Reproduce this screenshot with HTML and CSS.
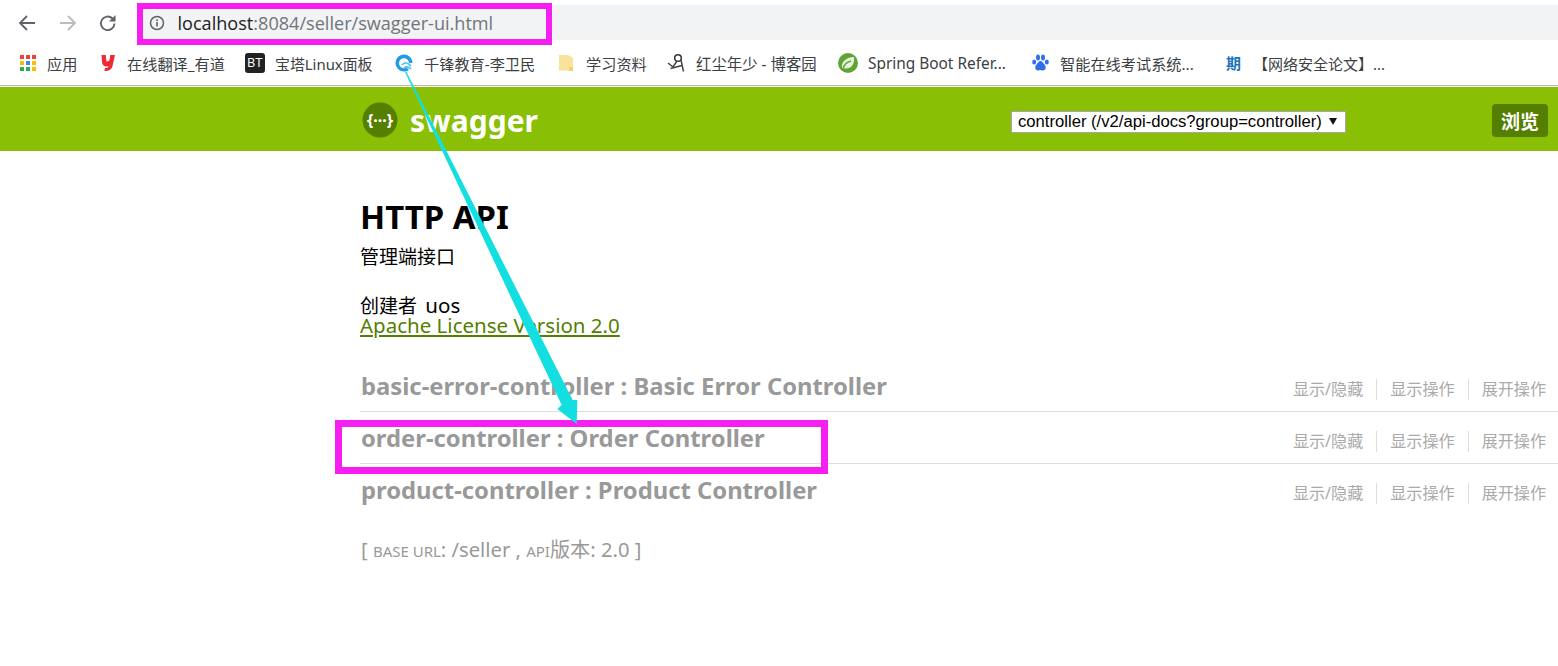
FILE: index.html
```html
<!DOCTYPE html>
<html lang="zh">
<head>
<meta charset="utf-8">
<title>Swagger UI</title>
<link rel="stylesheet" href="styles.css">
</head>
<body>
<div class="toolbar">
  <svg class="nav" width="20" height="20" viewBox="0 0 20 20"><path d="M18 10H3.500M10 3 3 10l7 7" fill="none" stroke="#5f6368" stroke-width="1.800"/></svg>
  <svg class="nav" width="20" height="20" viewBox="0 0 20 20"><path d="M2 10h14.500M10 3l7 7-7 7" fill="none" stroke="#b9bbbe" stroke-width="1.800"/></svg>
  <svg class="nav" width="20" height="20" viewBox="0 0 20 20"><path d="M16.500 10.500a6.800 6.800 0 1 1-2-5" fill="none" stroke="#5f6368" stroke-width="1.900"/><path d="M17.500 2v6.500H11z" fill="#5f6368"/></svg>
  <div class="omnibox">
    <svg class="info" width="16" height="16" viewBox="0 0 16 16"><circle cx="8" cy="8" r="6.500" fill="none" stroke="#5f6368" stroke-width="1.500"/><path d="M7.200 7h1.600v4.500H7.200zM7.200 4.300h1.600v1.600H7.200z" fill="#5f6368"/></svg>
    <span class="host">localhost</span><span class="path">:8084/seller/swagger-ui.html</span>
  </div>
</div>
<div class="bookmarks">
  <span class="bm bm-apps"><svg width="16" height="16" viewBox="0 0 16 16"><g><rect x="0" y="0" width="4" height="4" fill="#ea4335"/><rect x="6" y="0" width="4" height="4" fill="#ea4335"/><rect x="12" y="0" width="4" height="4" fill="#ea4335"/><rect x="0" y="6" width="4" height="4" fill="#fbbc05"/><rect x="6" y="6" width="4" height="4" fill="#4285f4"/><rect x="12" y="6" width="4" height="4" fill="#fbbc05"/><rect x="0" y="12" width="4" height="4" fill="#34a853"/><rect x="6" y="12" width="4" height="4" fill="#34a853"/><rect x="12" y="12" width="4" height="4" fill="#fbbc05"/></g></svg>应用</span>
  <span class="bm bm-youdao"><svg width="16" height="18" viewBox="0 0 16 18"><path d="M1.500 1h4.200l.8 6.500c2 .3 3-1 3.200-2.500L10.200 1H15l-2.500 11c-.7 3.500-3.200 5-8 5l.4-3c2.200 0 3.200-.3 3.600-1.800-4 .8-6.200-.7-6.500-4.200z" fill="#ee2a37"/></svg>在线翻译_有道</span>
  <span class="bm bm-bt"><span class="bt-icon">BT</span>宝塔Linux面板</span>
  <span class="bm bm-qf"><svg width="20" height="20" viewBox="0 0 20 20"><path d="M10 1.500a8.500 8.500 0 1 0 5 15.400l-2.500-2.400A5 5 0 1 1 15 10h3.500A8.500 8.500 0 0 0 10 1.500z" fill="#1f9be8"/><path d="M8 12c2-3 5-3 9 1M10 15c2-2 4-2 7 1" fill="none" stroke="#5fc0ef" stroke-width="1.800"/></svg>千锋教育-李卫民</span>
  <span class="bm bm-folder"><svg width="16" height="18" viewBox="0 0 16 18"><path d="M1 1h9l5 3v12.500H1z" fill="#fbe29b"/><path d="M11 13h4v4h-4z" fill="#f8cf63"/></svg>学习资料</span>
  <span class="bm bm-hc"><svg width="18" height="20" viewBox="0 0 18 20"><circle cx="11" cy="5" r="3.300" fill="none" stroke="#333" stroke-width="1.500"/><path d="M1 10l5 4 4-6M3.500 15.500 15 12.500M14 7l2.500 11.500" fill="none" stroke="#444" stroke-width="1.500"/></svg>红尘年少 - 博客园</span>
  <span class="bm bm-spring"><svg width="20" height="20" viewBox="0 0 20 20"><circle cx="10" cy="10" r="10" fill="#5fa536"/><path d="M4 15C3 8 9 4 16 4c1 7-3 12-9 11.500z" fill="#e8f3dd"/><path d="M5 16c1-4 4-7 8-8" fill="none" stroke="#5fa536" stroke-width="1.500"/></svg>Spring Boot Refer...</span>
  <span class="bm bm-baidu"><svg width="17" height="18" viewBox="0 0 17 18"><g fill="#2f6fee"><ellipse cx="6" cy="3.500" rx="2" ry="3"/><ellipse cx="11" cy="3.500" rx="2" ry="3"/><ellipse cx="2.200" cy="8" rx="2" ry="2.600"/><ellipse cx="14.800" cy="8" rx="2" ry="2.600"/><path d="M8.500 7c2 0 2.500 2 4 3.500 2 2 1.500 6-1.500 6-1.200 0-1.800-.5-2.500-.5s-1.300.5-2.500.5c-3 0-3.500-4-1.500-6C6 9 6.500 7 8.500 7z"/></g></svg>智能在线考试系统...</span>
  <span class="bm bm-paper"><span class="zhi">期</span>【网络安全论文】...</span>
</div>
<header class="swagger-header">
  <div class="logo">
    <svg width="36" height="36" viewBox="0 0 36 36"><circle cx="18" cy="18" r="17.500" fill="#547f00"/><text x="18" y="23.500" class="logo-glyph" text-anchor="middle">{···}</text></svg>
    <span class="logo-text">swagger</span>
  </div>
  <div class="select">controller (/v2/api-docs?group=controller)<span class="caret"></span></div>
  <button class="explore">浏览</button>
</header>
<main class="content">
  <h1>HTTP API</h1>
  <p class="desc">管理端接口</p>
  <p class="creator"><span class="cjk">创建者</span> uos</p>
  <a class="license" href="#">Apache License Version 2.0</a>
  <section class="resources">
    <div class="resource"><h2>basic-error-controller : Basic Error Controller</h2><ul class="ops"><li>显示/隐藏</li><li>显示操作</li><li>展开操作</li></ul></div>
    <div class="resource"><h2>order-controller : Order Controller</h2><ul class="ops"><li>显示/隐藏</li><li>显示操作</li><li>展开操作</li></ul></div>
    <div class="resource last"><h2>product-controller : Product Controller</h2><ul class="ops"><li>显示/隐藏</li><li>显示操作</li><li>展开操作</li></ul></div>
  </section>
  <p class="base">[ <small>BASE URL</small>: /seller , <small>API</small>版本: 2.0 ]</p>
</main>
<div class="mark mark-url"></div>
<div class="mark mark-order"></div>
<svg class="arrow" width="1558" height="666" viewBox="0 0 1558 666"><path d="M405 72 406.500 72 572.700 400 577.300 400 576.700 424 557.300 409 561.700 405z" fill="#14dfe0"/></svg>
</body>
</html>
```
FILE: styles.css
```css
* { box-sizing: border-box; }
html, body { margin: 0; padding: 0; }
body { width: 1558px; height: 666px; overflow: hidden; background: #fff; color: #000; font-family: "Noto Sans", "Noto Sans CJK SC", sans-serif; position: relative; }

.toolbar { height: 44px; padding: 5px 0 4px 17px; display: flex; align-items: center; }
.nav { margin-right: 20.500px; flex: none; }
.omnibox { flex: 1; height: 35px; margin-left: -2px; background: #f1f3f4; display: flex; align-items: center; padding-left: 12px; font-size: 18.100px; font-family: "Open Sans", "Noto Sans", sans-serif; }
.info { margin-right: 13px; flex: none; }
.host { color: #202124; }
.path { color: #70757a; }

.bookmarks { height: 42px; border-bottom: 1px solid #b8b8b8; font-size: 15.200px; color: #3c4043; position: relative; }
.bm { position: absolute; top: 7px; display: flex; align-items: center; height: 24px; white-space: nowrap; }
.bm svg { flex: none; }
.bm-apps { left: 20px; gap: 11px; }
.bm-youdao { left: 100px; gap: 11px; }
.bm-bt { left: 245px; gap: 10px; font-size: 14.900px; }
.bm-qf { left: 394px; gap: 10px; }
.bm-folder { left: 558px; gap: 12px; }
.bm-hc { left: 667px; gap: 11px; font-size: 15.400px; }
.bm-spring { left: 838px; gap: 10px; font-size: 15.400px; }
.bm-baidu { left: 1032px; gap: 11px; }
.bm-paper { left: 1226px; gap: 11px; font-size: 15px; }
.bt-icon { width: 20px; height: 20px; border-radius: 3px; background: #222; color: #fff; font: 12px/20px "Liberation Sans", sans-serif; text-align: center; }
.zhi { width: 16px; color: #1b75bc; font-weight: 700; font-size: 15px; line-height: 20px; }

.swagger-header { height: 64px; margin-top: 1px; background: #89bf04; padding: 0 10px 0 362px; display: flex; align-items: center; position: relative; }
.logo { display: flex; align-items: center; gap: 12px; margin-top: 2px; }
.logo-glyph { font: 700 16px "Noto Sans", sans-serif; fill: #fff; }
.logo-text { color: #fff; font-weight: 700; font-size: 30px; line-height: 36px; padding-top: 1px; }
.select { position: absolute; left: 1011px; top: 24px; width: 335px; height: 22px; background: #fff; border: 1px solid #a6a6a6; font: 16.650px/20px "Liberation Sans", sans-serif; padding-left: 6px; white-space: nowrap; }
.caret { position: absolute; right: 8px; top: 6px; border-left: 4px solid transparent; border-right: 4px solid transparent; border-top: 7px solid #111; }
.explore { position: absolute; left: 1492px; top: 17px; width: 56px; height: 33px; border: 0; border-radius: 4px; background: #547f00; color: #fff; font: 700 19px/33px "Noto Sans CJK SC", sans-serif; padding: 0; }

.content { padding: 0 0 0 360px; }
h1 { margin: 46px 0 0; font-size: 32.900px; line-height: 40px; font-weight: 700; }
.desc { margin: 0; font-size: 19px; line-height: 26px; padding-top: 7px; }
.creator { margin: 22px 0 0; font-size: 20.500px; line-height: 26px; }
.cjk { font-size: 19px; margin-right: 3px; }
.license { display: block; margin-top: -7px; font-size: 20.500px; line-height: 26px; color: #547f00; text-decoration: underline; }
.resources { margin-top: 22px; }
.resource { height: 52px; border-bottom: 1px solid #ddd; display: flex; justify-content: space-between; padding-left: 1px; }
.resource.last { border-bottom: 0; }
h2 { margin: 0; font-size: 23.800px; line-height: 52px; font-weight: 700; color: #999; white-space: nowrap; }
.ops { list-style: none; margin: 0; padding: 19px 12px 0 0; display: flex; font-size: 16.100px; color: #aaa; }
.ops li { line-height: 21px; padding: 0 13px; border-right: 1px solid #ddd; height: 21px; }
.ops li:last-child { border-right: 0; padding-right: 0; }
.base { margin: 17px 0 0 1px; font-size: 20.200px; line-height: 32px; color: #999; }
.base small { font-size: 15px; }

.mark { position: absolute; border-style: solid; border-color: #f71ef1; }
.mark-url { left: 137px; top: 3px; width: 415px; height: 42px; border-width: 6px; }
.mark-order { left: 335px; top: 420px; width: 493px; height: 54px; border-width: 7px; }
.arrow { position: absolute; left: 0; top: 0; pointer-events: none; }
```
